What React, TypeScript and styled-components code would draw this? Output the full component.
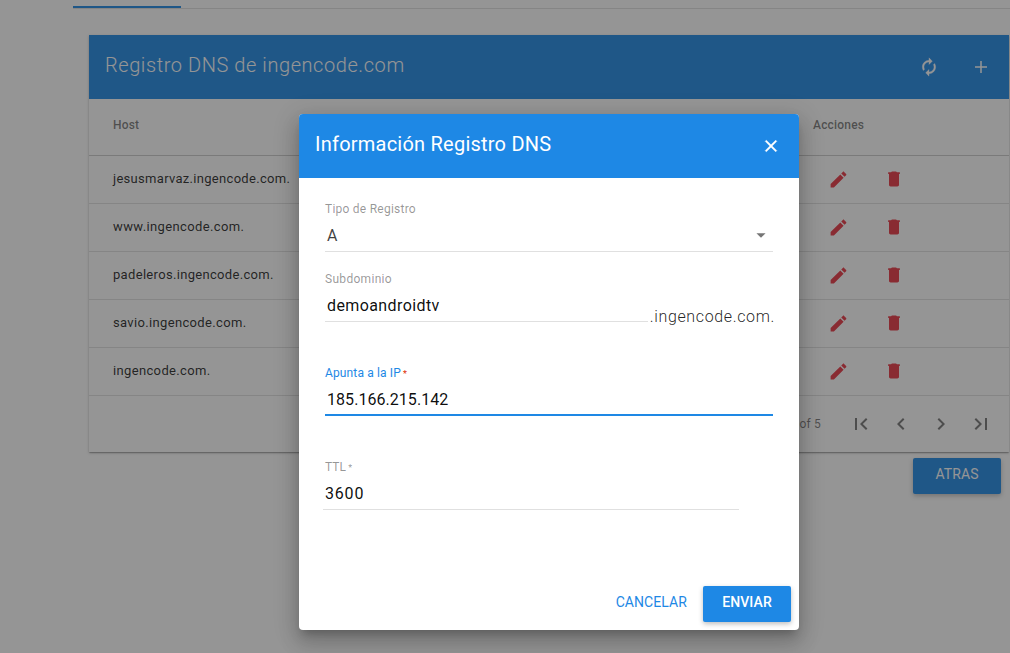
import React from 'react';
import styled, { createGlobalStyle } from 'styled-components';

const Global = createGlobalStyle`
  * { box-sizing: border-box; }
  html, body { margin: 0; overflow: hidden; }
  body { font-family: Roboto, "Liberation Sans", sans-serif; color: rgba(0,0,0,0.87); background: #fff; }
  button, input { font-family: inherit; }
`;

const Page = styled.div`
  height: 653px;
  overflow: hidden;
  position: relative;
  background: #fff;
`;

const TabStrip = styled.div`
  height: 9px;
  margin-left: 73px;
  padding-top: 6px;
  border-bottom: 1px solid rgba(0, 0, 0, 0.12);
`;

const TabInk = styled.div`
  width: 108px;
  height: 2px;
  background: #1e88e5;
`;

const Card = styled.section`
  margin: 26px 1px 0 89px;
  background: #fff;
  box-shadow: 0 1px 3px 0 rgba(0, 0, 0, 0.2), 0 1px 1px 0 rgba(0, 0, 0, 0.14),
    0 2px 1px -1px rgba(0, 0, 0, 0.12);
`;

const Toolbar = styled.header<{ $round?: boolean; $right: number }>`
  height: 64px;
  display: flex;
  align-items: center;
  justify-content: space-between;
  padding: 0 ${(p) => p.$right}px 1px 16px;
  background: #1e88e5;
  color: #fff;
  border-radius: ${(p) => (p.$round ? '4px 4px 0 0' : '0')};
`;

const Title = styled.h2<{ $spacing: number; $weight: number }>`
  margin: 0 0 3px;
  font-size: 20px;
  line-height: 24px;
  font-weight: ${(p) => p.$weight};
  letter-spacing: ${(p) => p.$spacing}px;
  white-space: nowrap;
`;

const ToolbarActions = styled.div`
  display: flex;
  gap: 28px;
`;

const IconButton = styled.button`
  width: 24px;
  height: 24px;
  padding: 0;
  border: 0;
  background: none;
  color: inherit;
  display: flex;
  align-items: center;
  justify-content: center;
`;

const Row = styled.div<{ $head?: boolean }>`
  height: ${(p) => (p.$head ? 57 : 48)}px;
  display: grid;
  grid-template-columns: 700px 1fr;
  align-items: center;
  padding: 0 24px ${(p) => (p.$head ? 0 : 2)}px;
  border-bottom: 1px solid rgba(0, 0, 0, ${(p) => (p.$head ? 0.2 : 0.12)});
`;

const HeadCell = styled.span<{ $spacing: number }>`
  font-size: 12px;
  line-height: 16px;
  font-weight: 500;
  color: rgba(0, 0, 0, 0.54);
  letter-spacing: ${(p) => p.$spacing}px;
  padding-bottom: 4px;
`;

const HostCell = styled.span<{ $spacing: number }>`
  font-size: 13px;
  line-height: 18px;
  color: rgba(0, 0, 0, 0.87);
  letter-spacing: ${(p) => p.$spacing}px;
`;

const RowActions = styled.div`
  display: flex;
  align-items: center;
  gap: 35px;
  padding: 1px 0 0 15px;
  color: #e83442;
`;

const Footer = styled.footer`
  height: 56px;
  display: flex;
  align-items: center;
  justify-content: flex-end;
  padding-right: 16px;
  color: rgba(0, 0, 0, 0.54);
`;

const Count = styled.span`
  font-size: 12px;
  letter-spacing: 0.2px;
  margin: 0 28px 1px 0;
`;

const Pager = styled.div`
  display: flex;
  gap: 16px;
`;

const BelowCard = styled.div`
  display: flex;
  justify-content: flex-end;
  padding: 6px 9px 0 0;
`;

const RaisedButton = styled.button<{ $weight: number; $spacing: number }>`
  width: 88px;
  height: 36px;
  padding: 0 0 4px;
  border: 0;
  border-radius: 2px;
  background: #1e88e5;
  color: #fff;
  font-size: 14px;
  font-weight: ${(p) => p.$weight};
  letter-spacing: ${(p) => p.$spacing}px;
  box-shadow: 0 2px 5px 0 rgba(0, 0, 0, 0.26);
`;

const FlatButton = styled.button`
  height: 36px;
  padding: 0 0 4px;
  border: 0;
  background: none;
  color: #1e88e5;
  font-size: 14px;
  font-weight: 400;
  letter-spacing: 0.08px;
`;

const Backdrop = styled.div`
  position: absolute;
  inset: 0;
  background: rgba(33, 33, 33, 0.48);
`;

const Dialog = styled.div`
  position: absolute;
  left: 299px;
  top: 114px;
  width: 500px;
  height: 516px;
  display: flex;
  flex-direction: column;
  background: #fff;
  border-radius: 4px;
  box-shadow: 0 7px 8px -4px rgba(0, 0, 0, 0.2), 0 13px 19px 2px rgba(0, 0, 0, 0.14),
    0 5px 24px 4px rgba(0, 0, 0, 0.12);
`;

const Form = styled.form`
  flex: 1;
  padding: 22px 24px 0 26px;
`;

const Field = styled.div<{ $width?: number; $height: number; $shift?: number }>`
  width: ${(p) => p.$width ?? 448}px;
  height: ${(p) => p.$height}px;
  margin-left: ${(p) => p.$shift ?? 0}px;
`;

const Label = styled.label<{ $focused?: boolean; $spacing: number; $indent?: number }>`
  display: block;
  height: 18px;
  padding-left: ${(p) => p.$indent ?? 0}px;
  font-size: 12px;
  line-height: 18px;
  color: ${(p) => (p.$focused ? '#1e88e5' : 'rgba(0,0,0,0.42)')};
  letter-spacing: ${(p) => p.$spacing}px;
`;

const Star = styled.span<{ $error?: boolean }>`
  margin-left: -1px;
  color: ${(p) => (p.$error ? '#dd2c00' : 'inherit')};
  font-size: 9px;
  line-height: 9px;
`;

const Control = styled.div<{ $focused?: boolean }>`
  display: flex;
  align-items: center;
  justify-content: space-between;
  height: 34px;
  padding: ${(p) => (p.$focused ? 3 : 2)}px 1px 0 2px;
  border-bottom: ${(p) => (p.$focused ? '2px solid #1e88e5' : '1px solid rgba(0,0,0,0.12)')};
`;

const Value = styled.span<{ $spacing: number; $muted?: boolean }>`
  font-size: 16px;
  line-height: 22px;
  color: ${(p) => (p.$muted ? 'rgba(0,0,0,0.75)' : 'rgba(0,0,0,0.95)')};
  letter-spacing: ${(p) => p.$spacing}px;
`;

const Caret = styled.span`
  display: flex;
  color: rgba(0, 0, 0, 0.54);
  padding-bottom: 2px;
`;

const SubdomainRow = styled.div`
  display: flex;
  height: 94px;
`;

const Suffix = styled.span`
  padding: 36px 0 0 2px;
  font-size: 16px;
  line-height: 22px;
  font-weight: 300;
  color: rgba(0, 0, 0, 0.87);
  letter-spacing: 0.64px;
  white-space: nowrap;
`;

const DialogActions = styled.div`
  height: 52px;
  display: flex;
  justify-content: flex-end;
  gap: 16px;
  padding: 8px 8px 0 0;
`;

function Icon({ d, size = 24, stroke = 0 }: { d: string; size?: number; stroke?: number }) {
  return (
    <svg
      width={size}
      height={size}
      viewBox="0 0 24 24"
      fill="currentColor"
      stroke={stroke ? 'currentColor' : 'none'}
      strokeWidth={stroke}
    >
      <path d={d} />
    </svg>
  );
}

const icons = {
  refresh:
    'M12 6v3l4-4-4-4v3c-4.42 0-8 3.58-8 8 0 1.57.46 3.03 1.24 4.26L6.7 14.8c-.45-.83-.7-1.79-.7-2.8 0-3.31 2.69-6 6-6zm6.76 1.74L17.3 9.2c.44.84.7 1.79.7 2.8 0 3.31-2.69 6-6 6v-3l-4 4 4 4v-3c4.42 0 8-3.58 8-8 0-1.57-.46-3.03-1.24-4.26z',
  pencil:
    'M3 17.25V21h3.75L17.81 9.94l-3.75-3.75L3 17.25zM20.71 7.04c.39-.39.39-1.02 0-1.41l-2.34-2.34c-.39-.39-1.02-.39-1.41 0l-1.83 1.83 3.75 3.75 1.83-1.83z',
  trash: 'M6 19c0 1.1.9 2 2 2h8c1.1 0 2-.9 2-2V5.8H6v13.2zM19 4h-3.5l-1-1h-5l-1 1H5v2h14V4z',
  close:
    'M19 6.41L17.59 5 12 10.59 6.41 5 5 6.41 10.59 12 5 17.59 6.41 19 12 13.41 17.59 19 19 17.59 13.41 12z',
  plus: 'M19.2 12.9h-6.3v6.3h-1.8v-6.3H4.8v-1.8h6.3V4.8h1.8v6.3h6.3z',
  first: 'M18.41 16.59L13.82 12l4.59-4.59L17 6l-6 6 6 6zM6 6h2v12H6z',
  prev: 'M15.41 7.41L14 6l-6 6 6 6 1.41-1.41L10.83 12z',
  next: 'M10 6L8.59 7.41 13.17 12l-4.58 4.59L10 18l6-6z',
  last: 'M5.59 7.41L10.18 12l-4.59 4.59L7 18l6-6-6-6zM16 6h2v12h-2z',
  caret: 'M7 10l5 5 5-5z',
};

const hosts = [
  { name: 'jesusmarvaz.ingencode.com.', spacing: 0.3 },
  { name: 'www.ingencode.com.', spacing: 0.38 },
  { name: 'padeleros.ingencode.com.', spacing: 0.32 },
  { name: 'savio.ingencode.com.', spacing: 0.34 },
  { name: 'ingencode.com.', spacing: 0.35 },
];

export default function App() {
  return (
    <Page>
      <Global />
      <TabStrip>
        <TabInk />
      </TabStrip>
      <Card>
        <Toolbar $right={16}>
          <Title $spacing={0.57} $weight={300}>Registro DNS de ingencode.com</Title>
          <ToolbarActions>
            <IconButton aria-label="Actualizar"><Icon d={icons.refresh} size={20} stroke={0.4} /></IconButton>
            <IconButton aria-label="Agregar"><Icon d={icons.plus} size={20} /></IconButton>
          </ToolbarActions>
        </Toolbar>
        <Row $head>
          <HeadCell $spacing={0.2}>Host</HeadCell>
          <HeadCell $spacing={0.2}>Acciones</HeadCell>
        </Row>
        {hosts.map((h) => (
          <Row key={h.name}>
            <HostCell $spacing={h.spacing}>{h.name}</HostCell>
            <RowActions>
              <Icon d={icons.pencil} size={21} />
              <Icon d={icons.trash} size={20} />
            </RowActions>
          </Row>
        ))}
        <Footer>
          <Count>1 - 5 of 5</Count>
          <Pager>
            <Icon d={icons.first} />
            <Icon d={icons.prev} />
            <Icon d={icons.next} />
            <Icon d={icons.last} />
          </Pager>
        </Footer>
      </Card>
      <BelowCard>
        <RaisedButton $weight={400} $spacing={0.1}>ATRAS</RaisedButton>
      </BelowCard>
      <Backdrop />
      <Dialog role="dialog">
        <Toolbar $round $right={16}>
          <Title $spacing={0.23} $weight={400}>Información Registro DNS</Title>
          <IconButton aria-label="Cerrar"><Icon d={icons.close} size={20} stroke={0.5} /></IconButton>
        </Toolbar>
        <Form>
          <Field $height={70}>
            <Label $spacing={0.24}>Tipo de Registro</Label>
            <Control>
              <Value $spacing={0} $muted>A</Value>
              <Caret><Icon d={icons.caret} size={22} /></Caret>
            </Control>
          </Field>
          <SubdomainRow>
            <Field $width={323} $height={70}>
              <Label $spacing={0.3}>Subdominio</Label>
              <Control><Value $spacing={0.4}>demoandroidtv</Value></Control>
            </Field>
            <Suffix>.ingencode.com.</Suffix>
          </SubdomainRow>
          <Field $height={94}>
            <Label $focused $spacing={0.14}>Apunta a la IP <Star $error>*</Star></Label>
            <Control $focused><Value $spacing={0.05}>185.166.215.142</Value></Control>
          </Field>
          <Field $width={416} $height={70} $shift={-2}>
            <Label $spacing={0.1} $indent={2}>TTL <Star>*</Star></Label>
            <Control><Value $spacing={0.8}>3600</Value></Control>
          </Field>
        </Form>
        <DialogActions>
          <FlatButton>CANCELAR</FlatButton>
          <RaisedButton $weight={500} $spacing={0.1}>ENVIAR</RaisedButton>
        </DialogActions>
      </Dialog>
    </Page>
  );
}
